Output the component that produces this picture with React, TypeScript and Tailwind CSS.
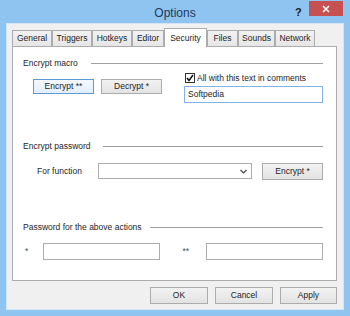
import React from 'react';

const tabs = [
  { name: 'General', w: 'w-[40px]' },
  { name: 'Triggers', w: 'w-[40px]' },
  { name: 'Hotkeys', w: 'w-[40px]' },
  { name: 'Editor', w: 'w-[32px]' },
  { name: 'Security', w: 'w-[43px]', active: true },
  { name: 'Files', w: 'w-[31px]' },
  { name: 'Sounds', w: 'w-[37px]' },
  { name: 'Network', w: 'w-[40px]' },
];

const Heading = ({ text, gap }: { text: string; gap: string }) => (
  <div className="flex h-[10px] items-center">
    <span className="leading-[10px] text-[#1e1e1e]">{text}</span>
    <div className={`h-px flex-1 bg-[#a0a0a0] ${gap}`} />
  </div>
);

const Button = ({ label, w, focused }: { label: string; w: string; focused?: boolean }) => (
  <button
    className={`flex items-center justify-center border text-[#1e1e1e] ${w} ${
      focused
        ? 'border-[#5b9bd5] bg-gradient-to-b from-[#f3f8fd] to-[#e3eefa]'
        : 'border-[#acacac] bg-gradient-to-b from-[#f2f2f2] to-[#e3e3e3]'
    }`}
  >
    {label}
  </button>
);

export default function App() {
  return (
    <div className="flex h-[316px] w-[350px] flex-col bg-[#8fc3f0] font-['Liberation_Sans',Arial,sans-serif] text-[8.5px]">
      {/* Title bar */}
      <div className="relative flex h-[23px] shrink-0 items-center justify-center">
        <span className="mt-[2px] text-[12px] text-[#23395b]">Options</span>
        <span className="absolute left-[295px] top-[4px] text-[11px] font-bold text-[#1a1a1a]">?</span>
        <div className="absolute left-[309px] top-[1px] flex h-[15px] w-[34px] items-center justify-center bg-[#c75050]">
          <svg width="8" height="8" viewBox="0 0 8 8">
            <path d="M1 1L7 7M7 1L1 7" stroke="#fff" strokeWidth="1.6" />
          </svg>
        </div>
      </div>

      {/* Client area */}
      <div className="mx-[6px] mb-[6px] flex flex-1 flex-col border border-[#d3e6f8] bg-[#f0f0f0] pl-[5px] pr-[6px] pt-[4px]">
        {/* Tabs */}
        <div className="relative z-10 -mb-px flex h-[19px] items-end">
          {tabs.map((t) =>
            t.active ? (
              <div
                key={t.name}
                className={`flex h-[19px] items-start justify-center border border-b-0 border-[#acacac] bg-white pt-[3px] text-[#1e1e1e] ${t.w}`}
              >
                {t.name}
              </div>
            ) : (
              <div
                key={t.name}
                className={`flex h-[17px] items-center justify-center border border-[#acacac] bg-gradient-to-b from-[#f2f2f2] to-[#e6e6e6] text-[#1e1e1e] ${t.w}`}
              >
                {t.name}
              </div>
            )
          )}
        </div>

        {/* Panel */}
        <div className="flex h-[235px] flex-col border border-[#acacac] bg-white pl-[10px] pr-[13px] pt-[11px]">
          <Heading text="Encrypt macro" gap="ml-[13px]" />
          <div className="mt-[5px] flex">
            <div className="ml-[10px] mt-[6px] flex h-[15px] gap-[7px]">
              <Button label="Encrypt **" w="w-[61px]" focused />
              <Button label="Decrypt *" w="w-[61px]" />
            </div>
            <div className="ml-[22px] flex w-[143px] flex-col">
              <div className="flex h-[10px] items-center">
                <div className="ml-px flex h-[10px] w-[10px] items-center justify-center border border-[#333] bg-white">
                  <svg width="8" height="8" viewBox="0 0 8 8">
                    <path d="M1 4L3 6.5L7 1" fill="none" stroke="#111" strokeWidth="1.5" />
                  </svg>
                </div>
                <span className="ml-[2px] leading-[10px] text-[#1e1e1e]">All with this text in comments</span>
              </div>
              <div className="mt-[3px] flex h-[17px] items-center border border-[#7eb4ea] bg-white px-[3px] text-[#1e1e1e]">
                Softpedia
              </div>
            </div>
          </div>

          <div className="mt-[38px]">
            <Heading text="Encrypt password" gap="ml-[12px]" />
          </div>
          <div className="mt-[12px] flex h-[16px] items-center">
            <span className="ml-[14px] w-[62px] text-[#1e1e1e]">For function</span>
            <div className="flex h-[16px] w-[157px] items-center justify-end border border-[#acacac] bg-white pr-[4px]">
              <svg width="7" height="5" viewBox="0 0 7 5">
                <path d="M0.5 1L3.5 4L6.5 1" fill="none" stroke="#444" strokeWidth="1.2" />
              </svg>
            </div>
            <div className="ml-[10px] flex h-[17px]">
              <Button label="Encrypt *" w="w-[61px]" />
            </div>
          </div>

          <div className="mt-[43px]">
            <Heading text="Password for the above actions" gap="ml-[8px]" />
          </div>
          <div className="mt-[11px] flex h-[17px] items-center">
            <span className="ml-[2px] w-[18px] text-[#3a4f6a]">*</span>
            <div className="h-[17px] w-[119px] border border-[#acacac] bg-white" />
            <span className="ml-[23px] w-[24px] text-[#3a4f6a]">**</span>
            <div className="h-[17px] w-[119px] border border-[#acacac] bg-white" />
          </div>
        </div>

        {/* Dialog buttons */}
        <div className="mt-[6px] flex h-[17px] justify-end gap-[7px]">
          <Button label="OK" w="w-[58px]" />
          <Button label="Cancel" w="w-[58px]" />
          <Button label="Apply" w="w-[57px]" />
        </div>
      </div>
    </div>
  );
}
